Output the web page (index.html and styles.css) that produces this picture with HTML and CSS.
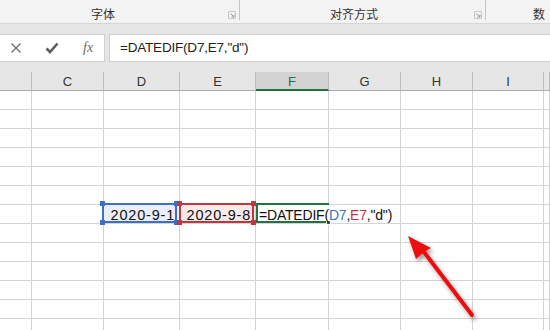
FILE: index.html
```html
<!DOCTYPE html>
<html lang="zh-CN">
<head>
  <meta charset="UTF-8">
  <title>DATEDIF</title>
  <link rel="stylesheet" href="styles.css">
</head>
<body>
  <div class="xl-page">
    <div class="xl-ribbon">
      <div class="xl-group xl-group-font">
        <span class="xl-group-label">字体</span>
        <svg class="xl-launcher" width="8" height="8" viewBox="0 0 8 8"><path d="M0.5 7.5V0.5H7.5V7.5Z" fill="none" stroke="#c8c8c8"/><path d="M2.5 2.5L6 6M6 3.5V6H3.5" fill="none" stroke="#9a9a9a"/></svg>
      </div>
      <div class="xl-group xl-group-align">
        <span class="xl-group-label">对齐方式</span>
        <svg class="xl-launcher" width="8" height="8" viewBox="0 0 8 8"><path d="M0.5 7.5V0.5H7.5V7.5Z" fill="none" stroke="#c8c8c8"/><path d="M2.5 2.5L6 6M6 3.5V6H3.5" fill="none" stroke="#9a9a9a"/></svg>
      </div>
      <div class="xl-group xl-group-num">
        <span class="xl-group-label">数</span>
      </div>
    </div>

    <div class="xl-fbar">
      <div class="xl-fbar-tools">
        <svg class="xl-tool" width="12" height="12" viewBox="0 0 12 12"><path d="M1.5 1.5L10.5 10.5M10.5 1.5L1.5 10.5" stroke="#6f6f6f" stroke-width="1.4"/></svg>
        <svg class="xl-tool" width="14" height="12" viewBox="0 0 14 12"><path d="M1.5 6.5L5 10L12.5 1.5" fill="none" stroke="#5f5f5f" stroke-width="2.6"/></svg>
        <span class="xl-fx">fx</span>
      </div>
      <div class="xl-fbar-input">=DATEDIF(D7,E7,"d")</div>
    </div>

    <div class="xl-sheet">
      <div class="xl-hd"></div><div class="xl-hd">C</div><div class="xl-hd">D</div><div class="xl-hd">E</div><div class="xl-hd xl-hd-on">F</div><div class="xl-hd">G</div><div class="xl-hd">H</div><div class="xl-hd">I</div><div class="xl-hd"></div>

      <div></div><div></div><div></div><div></div><div></div><div></div><div></div><div></div><div></div>
      <div></div><div></div><div></div><div></div><div></div><div></div><div></div><div></div><div></div>
      <div></div><div></div><div></div><div></div><div></div><div></div><div></div><div></div><div></div>
      <div></div><div></div><div></div><div></div><div></div><div></div><div></div><div></div><div></div>
      <div></div><div></div><div></div><div></div><div></div><div></div><div></div><div></div><div></div>
      <div></div><div></div><div></div><div></div><div></div><div></div><div></div><div></div><div></div>

      <!-- row 7: the two dates and the formula being edited -->
      <div></div><div></div>
      <div class="xl-ref xl-ref-blue">
        <span class="xl-val">2020-9-1</span>
        <span class="xl-frame"><i class="xl-h xl-h-tl"></i><i class="xl-h xl-h-tr"></i><i class="xl-h xl-h-bl"></i><i class="xl-h xl-h-br"></i></span>
      </div>
      <div class="xl-ref xl-ref-red">
        <span class="xl-val">2020-9-8</span>
        <span class="xl-frame"><i class="xl-h xl-h-tl"></i><i class="xl-h xl-h-tr"></i><i class="xl-h xl-h-bl"></i><i class="xl-h xl-h-br"></i></span>
      </div>
      <div class="xl-active">
        <span class="xl-frame"><i class="xl-fill"></i></span>
        <span class="xl-formula">=DATEDIF(<span class="xl-c-blue">D7</span>,<span class="xl-c-red">E7</span>,"d")</span>
      </div>
      <div></div><div></div><div></div><div></div>

      <div></div><div></div><div></div><div></div><div></div><div></div><div></div><div></div><div></div>
      <div></div><div></div><div></div><div></div><div></div><div></div><div></div><div></div><div></div>
      <div></div><div></div><div></div><div></div><div></div><div></div><div></div><div></div><div></div>
      <div></div><div></div><div></div><div></div><div></div><div></div><div></div><div></div><div></div>
      <div></div><div></div><div></div><div></div><div></div><div></div><div></div><div></div><div></div>
      <div></div><div></div><div></div><div></div><div></div><div></div><div></div><div></div><div></div>
    </div>

    <svg class="xl-arrow" width="550" height="330" viewBox="0 0 550 330">
      <defs>
        <filter id="arrowShadow" x="-20%" y="-20%" width="140%" height="140%">
          <feDropShadow dx="2" dy="3" stdDeviation="2.2" flood-color="#000" flood-opacity="0.4"/>
        </filter>
      </defs>
      <g filter="url(#arrowShadow)" fill="#ee1111">
        <path d="M472 315L424 252" stroke="#ee1111" stroke-width="4" stroke-linecap="round"/>
        <path d="M408 236L431 248L424 252L416 259Z"/>
      </g>
    </svg>
  </div>
</body>
</html>
```

FILE: styles.css
```css
* {
  box-sizing: border-box;
}

body {
  margin: 0;
  background-color: #e6e6e6;
  font-family: "Liberation Sans", Arial, sans-serif;
  color: #222;
}

.xl-page {
  position: relative;
  width: 550px;
  height: 330px;
  overflow: hidden;
}

/* ribbon group labels */
.xl-ribbon {
  display: flex;
  height: 24px;
  background-color: #f3f3f3;
  border-bottom: 1px solid #d6d6d6;
}

.xl-group {
  display: flex;
  align-items: flex-end;
  height: 20px;
}

.xl-group-font {
  width: 240px;
  border-right: 1px solid #c6c6c6;
}

.xl-group-align {
  width: 246px;
  border-right: 1px solid #c6c6c6;
}

.xl-group-num {
  flex: 1;
  padding-left: 47px;
}

.xl-group-label {
  flex: 1;
  text-align: center;
  font-family: "Noto Sans CJK SC", sans-serif;
  font-size: 12px;
  line-height: 14px;
  color: #333;
  margin-bottom: -1px;
}

.xl-group-font .xl-group-label {
  padding-right: 22px;
}

.xl-group-align .xl-group-label {
  padding-right: 6px;
}

.xl-group-num .xl-group-label {
  flex: none;
}

.xl-launcher {
  margin: 0 3px 1px 0;
}

/* formula bar */
.xl-fbar {
  display: flex;
  gap: 4px;
  padding: 10px 0;
}

.xl-fbar-tools {
  display: flex;
  align-items: center;
  width: 106px;
  height: 28px;
  margin-left: -1px;
  background-color: #fff;
  border: 1px solid #d0d0d0;
  padding-left: 10px;
}

.xl-tool + .xl-tool {
  margin-left: 23px;
}

.xl-fx {
  margin-left: 24px;
  font-family: "Liberation Serif", serif;
  font-style: italic;
  font-size: 14px;
  color: #6a6a6a;
}

.xl-fbar-input {
  flex: 1;
  height: 28px;
  background-color: #fff;
  border: 1px solid #d0d0d0;
  border-right: none;
  padding-left: 10px;
  font-size: 13.5px;
  letter-spacing: -0.2px;
  line-height: 26px;
  color: #222;
}

/* worksheet grid */
.xl-sheet {
  display: grid;
  grid-template-columns: 32px 72px 76px 76px 73px 72px 72px 71px 1fr;
  grid-auto-rows: 19px;
  background-color: #fff;
}

.xl-sheet > div {
  position: relative;
  border-right: 1px solid #d4d4d4;
  border-bottom: 1px solid #d4d4d4;
}

.xl-sheet > .xl-hd {
  background-color: #e6e6e6;
  border-right-color: #bdbdbd;
  border-bottom-color: #ababab;
  text-align: center;
  font-size: 13px;
  line-height: 19px;
  color: #333;
}

.xl-sheet > .xl-hd-on {
  background-color: #d2d2d2;
  color: #217346;
  border-bottom: 2px solid #217346;
}

.xl-sheet > .xl-ref-blue {
  background-color: #e9eef8;
}

.xl-sheet > .xl-ref-red {
  background-color: #fbeaea;
}

.xl-val {
  display: block;
  text-align: right;
  padding-right: 4px;
  font-size: 14.5px;
  letter-spacing: 0.8px;
  line-height: 20px;
  color: #111;
}

.xl-frame {
  position: absolute;
  top: -2px;
  bottom: 0;
  border: 2px solid;
  z-index: 2;
}

.xl-ref-blue .xl-frame {
  left: -2px;
  right: 2px;
  border-color: #3b70c4;
}

.xl-ref-red .xl-frame {
  left: -1px;
  right: 1px;
  border-color: #c2373d;
}

.xl-h {
  position: absolute;
  width: 5px;
  height: 5px;
}

.xl-ref-blue .xl-h {
  background-color: #3b70c4;
}

.xl-ref-red .xl-h {
  background-color: #c2373d;
}

.xl-h-tl { left: -4px; top: -4px; }
.xl-h-tr { right: -4px; top: -4px; }
.xl-h-bl { left: -4px; bottom: -4px; }
.xl-h-br { right: -4px; bottom: -4px; }

.xl-sheet > .xl-active {
  border-right-color: transparent;
  z-index: 1;
}

.xl-active .xl-frame {
  left: 0;
  right: -1px;
  border-color: #217346;
  border-right: none;
  z-index: 1;
}

.xl-fill {
  position: absolute;
  right: -2px;
  bottom: -4px;
  width: 5px;
  height: 5px;
  background-color: #217346;
  border: 1px solid #fff;
}

.xl-formula {
  position: relative;
  display: block;
  padding-left: 3px;
  white-space: nowrap;
  font-size: 14px;
  letter-spacing: -0.2px;
  line-height: 20px;
  color: #111;
  z-index: 3;
}

.xl-c-blue {
  color: #3b70c4;
}

.xl-c-red {
  color: #c2373d;
}

.xl-arrow {
  position: absolute;
  left: 0;
  top: 0;
  pointer-events: none;
}
```
